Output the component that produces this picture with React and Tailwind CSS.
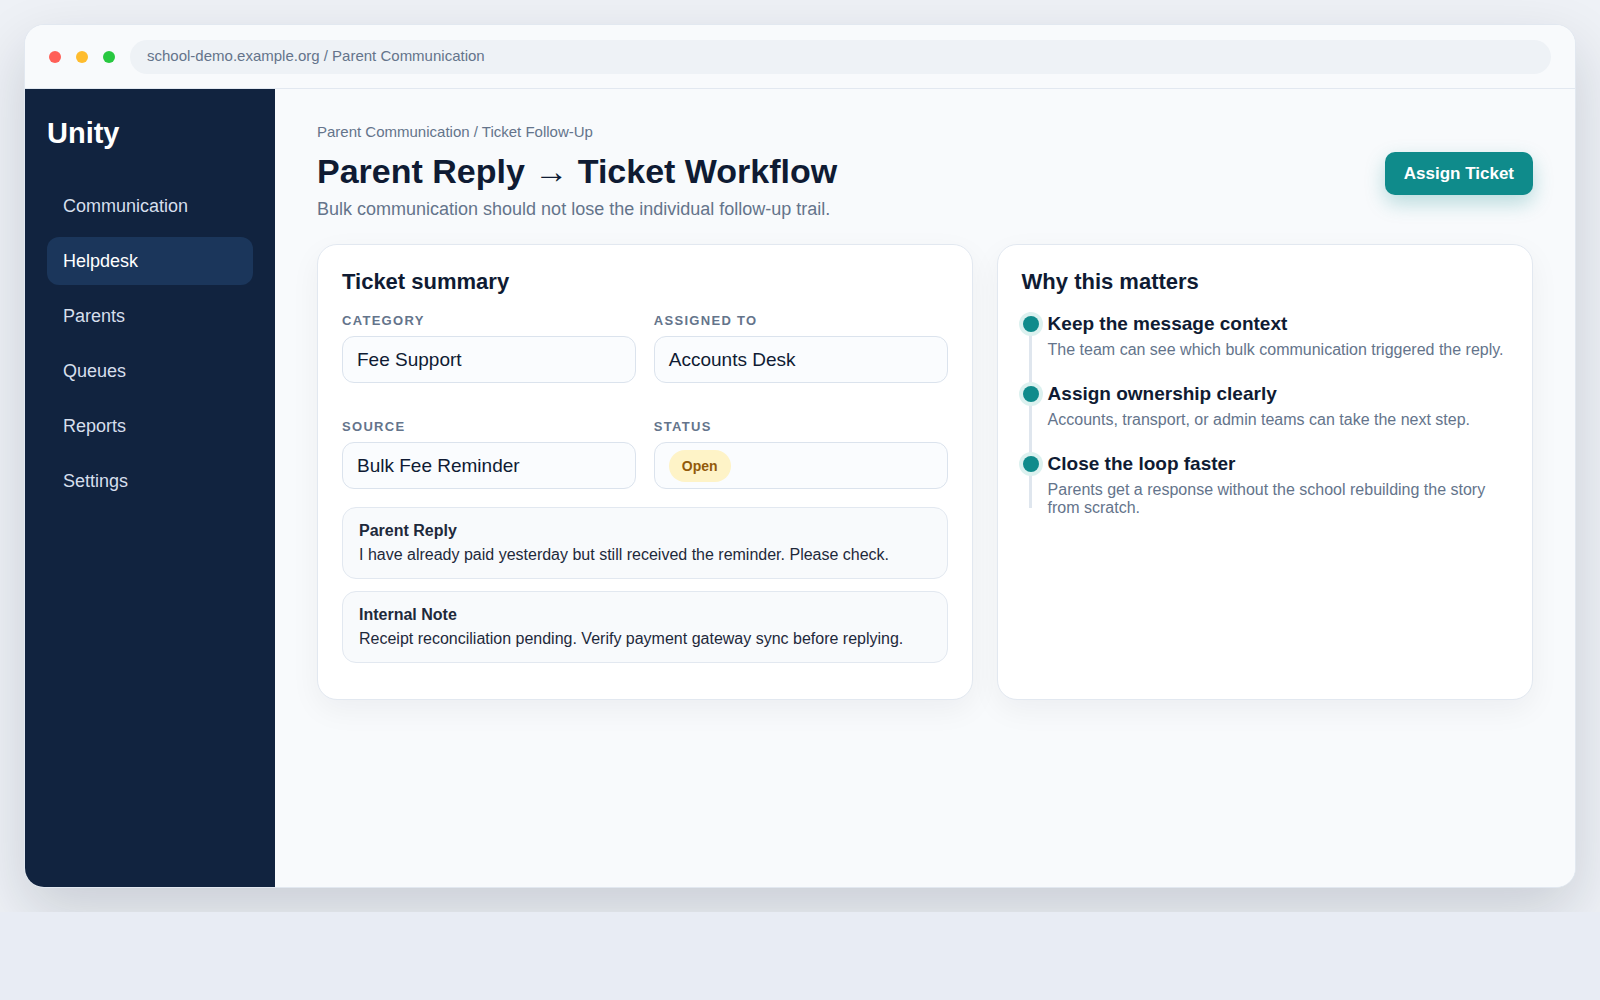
export default function App() {
  const nav = ["Communication", "Helpdesk", "Parents", "Queues", "Reports", "Settings"];
  const fields = [
    { label: "Category", value: "Fee Support" },
    { label: "Assigned to", value: "Accounts Desk" },
    { label: "Source", value: "Bulk Fee Reminder" },
    { label: "Status", pill: "Open" },
  ];
  const steps = [
    { t: "Keep the message context", d: "The team can see which bulk communication triggered the reply." },
    { t: "Assign ownership clearly", d: "Accounts, transport, or admin teams can take the next step." },
    { t: "Close the loop faster", d: "Parents get a response without the school rebuilding the story from scratch." },
  ];
  return (
    <div className="min-h-screen bg-[#e8ecf4] font-['Liberation_Sans',Arial,sans-serif]">
      <div className="overflow-hidden bg-[#eef1f6] p-6">
        <div className="flex h-[864px] flex-col overflow-hidden rounded-[20px] border border-[#e2e8f0] bg-[#f8fafc] shadow-[0_24px_60px_rgba(15,23,42,0.16)]">
          <div className="flex h-[64px] shrink-0 items-center gap-[15px] border-b border-[#e2e8f0] bg-[#f8fafc] px-6">
            <span className="h-3 w-3 rounded-full bg-[#ff5f57]" />
            <span className="h-3 w-3 rounded-full bg-[#febc2e]" />
            <span className="h-3 w-3 rounded-full bg-[#28c840]" />
            <div className="flex h-[34px] flex-1 items-center rounded-full bg-[#eef2f6] px-[17px] text-[15px] text-[#64748b]">
              school-demo.example.org / Parent Communication
            </div>
          </div>
          <div className="flex min-h-0 flex-1">
            <aside className="w-[250px] shrink-0 bg-[#11233f] px-[22px] pt-[27px]">
              <div className="text-[29px] font-bold leading-[34px] text-white">Unity</div>
              <nav className="mt-8 flex flex-col gap-[7px]">
                {nav.map((n) => (
                  <div
                    key={n}
                    className={
                      n === "Helpdesk"
                        ? "flex h-12 items-center rounded-[12px] bg-[#1b365b] px-4 text-[18px] text-white"
                        : "flex h-12 items-center rounded-[12px] px-4 text-[18px] text-[#d6dfec]"
                    }
                  >
                    {n}
                  </div>
                ))}
              </nav>
            </aside>
            <main className="min-w-0 flex-1 bg-[#f8fafc] px-[42px] pt-[33px]">
              <div className="flex items-start justify-between">
                <div>
                  <div className="text-[15px] leading-5 text-[#64748b]">Parent Communication / Ticket Follow-Up</div>
                  <h1 className="mt-[9px] text-[34px] font-bold leading-10 text-[#0f1b33]">Parent Reply → Ticket Workflow</h1>
                  <p className="mt-[5px] text-[18px] leading-[26px] text-[#64748b]">
                    Bulk communication should not lose the individual follow-up trail.
                  </p>
                </div>
                <button className="mt-[30px] h-[43px] rounded-[10px] bg-[#0f8b8b] px-[19px] text-[17px] font-bold text-white shadow-[0_8px_20px_rgba(15,139,139,0.28)]">
                  Assign Ticket
                </button>
              </div>
              <div className="mt-[22px] grid grid-cols-[11fr_9fr] gap-6">
                <section className="rounded-[20px] border border-[#e2e8f0] bg-white px-6 pb-9 pt-[26px] shadow-[0_10px_30px_rgba(15,23,42,0.05)]">
                  <h2 className="text-[22px] font-bold leading-[22px] text-[#0f1b33]">Ticket summary</h2>
                  <div className="mt-5 grid grid-cols-2 gap-x-[18px] gap-y-[36px]">
                    {fields.map((f) => (
                      <div key={f.label}>
                        <div className="text-[13px] font-bold uppercase leading-4 tracking-[0.1em] text-[#64748b]">{f.label}</div>
                        <div className="mt-[7px] flex h-[47px] items-center rounded-[12px] border border-[#dbe3ed] bg-[#fafcfe] px-[14px] pt-px text-[19px] text-[#0f1b33]">
                          {f.pill ? (
                            <span className="flex h-8 items-center rounded-full bg-[#fef3c7] px-[13px] text-[14px] font-bold text-[#925a0a]">
                              {f.pill}
                            </span>
                          ) : (
                            f.value
                          )}
                        </div>
                      </div>
                    ))}
                  </div>
                  <div className="mt-[18px] flex flex-col gap-3">
                    <div className="rounded-[14px] border border-[#e2e8f0] bg-[#f8fafc] px-4 py-[13px] text-[#1e293b]">
                      <div className="text-base font-bold leading-5">Parent Reply</div>
                      <div className="mt-[4px] text-base leading-5">
                        I have already paid yesterday but still received the reminder. Please check.
                      </div>
                    </div>
                    <div className="rounded-[14px] border border-[#e2e8f0] bg-[#f8fafc] px-4 py-[13px] text-[#1e293b]">
                      <div className="text-base font-bold leading-5">Internal Note</div>
                      <div className="mt-[4px] text-base leading-5">
                        Receipt reconciliation pending. Verify payment gateway sync before replying.
                      </div>
                    </div>
                  </div>
                </section>
                <section className="rounded-[20px] border border-[#e2e8f0] bg-white px-6 pb-6 pt-[26px] shadow-[0_10px_30px_rgba(15,23,42,0.05)]">
                  <h2 className="text-[22px] font-bold leading-[22px] text-[#0f1b33]">Why this matters</h2>
                  <div className="mt-[19px]">
                    {steps.map((s, i) => (
                      <div key={s.t} className={i === steps.length - 1 ? "relative pl-[26px]" : "relative pl-[26px] pb-[23px]"}>
                        <span
                          className={
                            i === steps.length - 1
                              ? "absolute bottom-[9px] left-[7.5px] top-0 w-[3px] bg-[#dfe6ee]"
                              : "absolute bottom-0 left-[7.5px] top-0 w-[3px] bg-[#dfe6ee]"
                          }
                        />
                        <span className="absolute left-px top-[4px] h-4 w-4 rounded-full bg-[#0f8b8b] shadow-[0_0_0_4px_#dcf1ef]" />
                        <div className="text-[19px] font-bold leading-6 text-[#0f1b33]">{s.t}</div>
                        <div className="mt-[5px] text-base leading-[18px] text-[#64748b]">{s.d}</div>
                      </div>
                    ))}
                  </div>
                </section>
              </div>
            </main>
          </div>
        </div>
      </div>
    </div>
  );
}
